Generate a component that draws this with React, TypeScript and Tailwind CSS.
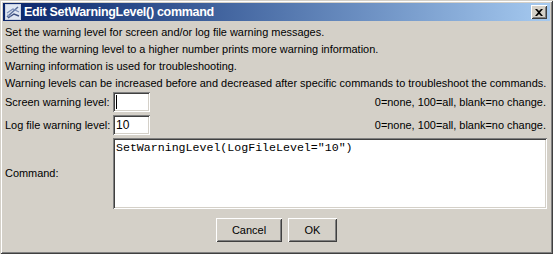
import React from "react";

const sunken =
  "shadow-[inset_1px_1px_0_#808080,inset_-1px_-1px_0_#ffffff,inset_2px_2px_0_#404040,inset_-2px_-2px_0_#d4d0c8]";
const raised =
  "shadow-[inset_1px_1px_0_#ffffff,inset_-1px_-1px_0_#404040,inset_2px_2px_0_#d4d0c8,inset_-2px_-2px_0_#808080]";

function TitleIcon() {
  return (
    <svg width="16" height="16" viewBox="0 0 16 16">
      <rect x="0.5" y="0.5" width="15" height="15" fill="#e8eef8" stroke="#c8d0e0" />
      <rect x="1" y="1" width="14" height="14" fill="#dfe6f2" />
      <path d="M2 13 L13 3" stroke="#5a6f9c" strokeWidth="1.5" />
      <path d="M2 9 L8 5 L14 8" stroke="#7d8fb8" strokeWidth="1.2" fill="none" />
      <path d="M3 14 L9 10 L14 12" stroke="#3d4f80" strokeWidth="1.4" fill="none" />
      <path d="M2 11 L6 12" stroke="#8a9cc4" strokeWidth="1" />
    </svg>
  );
}

export default function App() {
  const lines = [
    "Set the warning level for screen and/or log file warning messages.",
    "Setting the warning level to a higher number prints more warning information.",
    "Warning information is used for troubleshooting.",
    "Warning levels can be increased before and decreased after specific commands to troubleshoot the commands.",
  ];
  return (
    <div
      className={`w-[553px] h-[254px] bg-[#d4d0c8] p-[3px] flex flex-col text-black shadow-[inset_1px_1px_0_#d4d0c8,inset_-1px_-1px_0_#404040,inset_2px_2px_0_#ffffff,inset_-2px_-2px_0_#808080]`}
      style={{ fontFamily: '"Liberation Sans", Arial, sans-serif' }}
    >
      <div className="h-[18px] flex items-center bg-linear-to-r from-[#0a246a] to-[#a6caf0] pl-[2px] pr-[3px]">
        <TitleIcon />
        <span className="ml-[3px] text-white font-bold text-[12.5px] leading-none tracking-[-0.3px]">
          Edit SetWarningLevel() command
        </span>
        <div className="flex-1" />
        <div
          className={`w-[16px] h-[14px] bg-[#d4d0c8] flex items-center justify-center ${raised}`}
        >
          <svg width="8" height="7" viewBox="0 0 8 7">
            <path d="M0 0h2l2 2 2-2h2v0L5 3.5 8 7H6L4 5 2 7H0l3-3.5z" fill="#000" />
          </svg>
        </div>
      </div>

      <div className="flex flex-col pl-[2px] pr-[4px] mt-[3px] text-[10.94px]">
        {lines.map((l) => (
          <div key={l} className="h-[17px] leading-[17px] whitespace-nowrap">
            {l}
          </div>
        ))}

        <div className="flex items-center h-[20px]">
          <div className="w-[108px] whitespace-nowrap">Screen warning level:</div>
          <div className={`w-[37px] h-[20px] bg-white flex items-center pl-[3px] ${sunken}`}>
            <div className="w-px h-[14px] bg-black" />
          </div>
          <div className="flex-1 text-right whitespace-nowrap">0=none, 100=all, blank=no change.</div>
        </div>

        <div className="flex items-center h-[20px] mt-[3px]">
          <div className="w-[108px] whitespace-nowrap">Log file warning level:</div>
          <div
            className={`w-[37px] h-[20px] bg-white flex items-center pl-[3px] text-[12px] ${sunken}`}
          >
            10
          </div>
          <div className="flex-1 text-right whitespace-nowrap">0=none, 100=all, blank=no change.</div>
        </div>

        <div className="flex items-center h-[71px] mt-[3px] pr-[0px]">
          <div className="w-[108px] whitespace-nowrap">Command:</div>
          <div
            className={`flex-1 h-[71px] bg-white pl-[3px] pt-[3px] mr-[-1px] ${sunken}`}
          >
            <div
              className="text-[11.6px] leading-[14px] whitespace-nowrap"
              style={{ fontFamily: '"Liberation Mono", "Courier New", monospace' }}
            >
              SetWarningLevel(LogFileLevel="10")
            </div>
          </div>
        </div>

        <div className="flex justify-center gap-[6px] mt-[9px] ml-[2px]">
          <div
            className={`w-[66px] h-[24px] flex items-center justify-center text-[11px] ${raised}`}
          >
            Cancel
          </div>
          <div
            className={`w-[49px] h-[24px] flex items-center justify-center text-[11px] ${raised}`}
          >
            OK
          </div>
        </div>
      </div>
    </div>
  );
}
